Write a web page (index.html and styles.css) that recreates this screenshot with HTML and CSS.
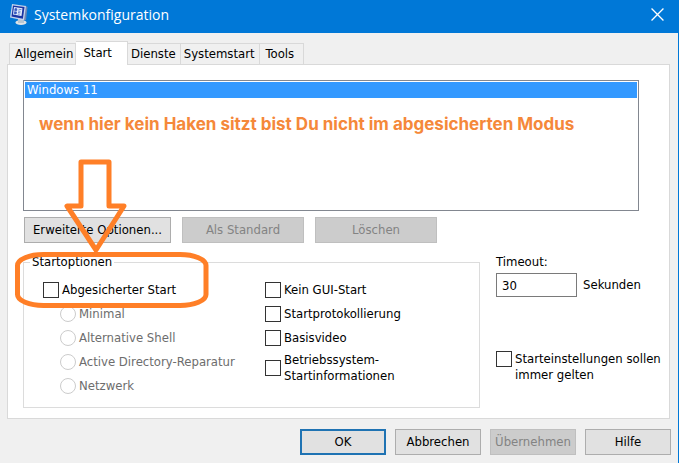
FILE: index.html
```
<!DOCTYPE html>
<html lang="de">
<head>
<meta charset="utf-8">
<title>Systemkonfiguration</title>
<link rel="stylesheet" href="styles.css">
</head>
<body>
<div class="window">
  <header class="titlebar">
    <svg class="app-icon" viewBox="0 0 20 22" aria-hidden="true">
      <ellipse cx="12" cy="18.500" rx="5.500" ry="2.500" fill="#dfe3e6"/>
      <path d="M9 14l6 1v4H9z" fill="#b9c6d1"/>
      <path d="M16 1.500l2.500 1.500-1.500 13-3 .5z" fill="#6f86b4"/>
      <path d="M3 0l14 2-2 14.500L1 13.500z" fill="#c3d2ec"/>
      <path d="M4 1.500l11.500 1.600-1.600 11.600L2.500 12.500z" fill="#1b35a4"/>
      <path d="M5 3l8.500 1.200-1 7.800L4 10.500z" fill="#e8f1fd"/>
      <path d="M6 4.500l2 .3-.3 2-2-.3zM5.500 7.700l2 .3-.3 2-2-.3zM9.500 5.200l3 .4M9 7l2.500 .3M9 8.500l2.500 .4M8.700 10l2 .3" fill="#3558c0" stroke="#3558c0" stroke-width=".7"/>
    </svg>
    <h1 class="title">Systemkonfiguration</h1>
    <button class="close" type="button" aria-label="Schließen">
      <svg viewBox="0 0 12 12" aria-hidden="true"><path d="M.5 .5l11 11M11.500 .5l-11 11" stroke="#fff" stroke-width="1.200"/></svg>
    </button>
  </header>

  <main class="content">
    <div class="tabs" role="tablist">
      <button class="tab tab-first" type="button" role="tab">Allgemein</button>
      <button class="tab tab-active" type="button" role="tab" aria-selected="true">Start</button>
      <button class="tab" type="button" role="tab">Dienste</button>
      <button class="tab" type="button" role="tab">Systemstart</button>
      <button class="tab tab-last" type="button" role="tab">Tools</button>
    </div>

    <section class="panel" role="tabpanel">
      <div class="boot-list">
        <div class="boot-item">Windows 11</div>
        <p class="note">wenn hier kein Haken sitzt bist Du nicht im abgesicherten Modus</p>
      </div>

      <div class="actions">
        <button class="btn btn-wide" type="button">Erweiterte Optionen...</button>
        <button class="btn btn-mid" type="button" disabled>Als Standard</button>
        <button class="btn btn-mid" type="button" disabled>Löschen</button>
      </div>

      <div class="settings">
        <fieldset class="group">
          <legend>Startoptionen</legend>
          <div class="group-columns">
            <div class="column">
              <label class="option"><input type="checkbox">Abgesicherter Start</label>
              <label class="option sub"><input type="radio" name="mode" disabled>Minimal</label>
              <label class="option sub"><input type="radio" name="mode" disabled>Alternative Shell</label>
              <label class="option sub"><input type="radio" name="mode" disabled>Active Directory-Reparatur</label>
              <label class="option sub"><input type="radio" name="mode" disabled>Netzwerk</label>
            </div>
            <div class="column">
              <label class="option"><input type="checkbox">Kein GUI-Start</label>
              <label class="option"><input type="checkbox">Startprotokollierung</label>
              <label class="option"><input type="checkbox">Basisvideo</label>
              <label class="option option-tall"><input type="checkbox"><span>Betriebssystem-<br>Startinformationen</span></label>
            </div>
          </div>
        </fieldset>

        <div class="side">
          <label class="timeout-label" for="timeout">Timeout:</label>
          <div class="timeout-row">
            <input class="timeout" id="timeout" type="text" value="30">
            <span>Sekunden</span>
          </div>
          <label class="option option-top"><input type="checkbox"><span>Starteinstellungen sollen<br>immer gelten</span></label>
        </div>
      </div>
    </section>
  </main>

  <footer class="footer">
    <button class="btn btn-default" type="button">OK</button>
    <button class="btn" type="button">Abbrechen</button>
    <button class="btn" type="button" disabled>Übernehmen</button>
    <button class="btn" type="button">Hilfe</button>
  </footer>

  <svg class="markup" viewBox="0 0 200 156" aria-hidden="true">
    <path d="M69 6h28v44h15L84 94 55 50h14z"/>
    <rect x="5.500" y="98.500" width="188.500" height="51" rx="26" ry="11"/>
  </svg>
</div>
</body>
</html>
```
FILE: styles.css
```
* {
  box-sizing: border-box;
}

body {
  margin: 0;
  background: #f0f0f0;
  color: #000;
  font: 13px/16px Tahoma, "DejaVu Sans Condensed", "Noto Sans", sans-serif;
}

button,
input {
  font: inherit;
  color: inherit;
}

.window {
  position: relative;
  display: flex;
  flex-direction: column;
  min-height: 100vh;
  border-right: 1px solid #0078d7;
}

.titlebar {
  display: flex;
  align-items: center;
  height: 33px;
  padding: 0 14px 4px 9px;
  background: #0078d7;
  color: #fff;
}

.app-icon {
  width: 20px;
  height: 22px;
}

.title {
  flex: 1;
  margin: 0 0 0 5px;
  font: 14px/20px "Segoe UI", "Open Sans", sans-serif;
}

.close {
  padding: 0;
  border: 0;
  background: none;
}

.close svg {
  display: block;
  width: 13px;
  height: 13px;
}

.content {
  padding: 8px 8px 0 7px;
}

.tabs {
  display: flex;
  align-items: flex-end;
  padding-left: 2px;
}

.tab {
  height: 21px;
  padding: 0 4px 0 3px;
  border: 1px solid #d9d9d9;
  border-width: 1px 1px 0 0;
  background: #f0f0f0;
}

.tab-first {
  padding: 0 2px 0 5px;
  border-left-width: 1px;
}

.tab-last {
  padding: 0 9px 0 6px;
}

.tab-active {
  z-index: 1;
  height: 24px;
  margin-bottom: -1px;
  padding: 0 15px 2px 7px;
  background: #fff;
}

.panel {
  padding: 15px 0 10px 15px;
  border: 1px solid #d9d9d9;
  background: #fff;
}

.boot-list {
  height: 131px;
  margin-right: 30px;
  padding: 1px;
  border: 1px solid #828790;
}

.boot-item {
  padding-left: 2px;
  background: #3399ff;
  color: #fff;
}

.note {
  margin: 16px 0 0 14px;
  color: #f5883a;
  font: 700 17px/20px Inter, "Liberation Sans", sans-serif;
}

.actions {
  display: flex;
  gap: 11px;
  margin-top: 6px;
  padding-left: 1px;
}

.btn {
  width: 86px;
  height: 26px;
  padding: 0;
  border: 1px solid #adadad;
  background: #e1e1e1;
}

.btn-wide {
  width: 147px;
}

.btn-mid {
  width: 122px;
}

.btn:disabled {
  border-color: #bfbfbf;
  background: #ccc;
  color: #838383;
}

.btn-default {
  border: 2px solid #1f73b3;
}

.settings {
  display: flex;
  gap: 16px;
  margin-top: 11px;
}

.group {
  flex: 1;
  min-width: 0;
  margin: 0;
  padding: 8px 19px 9px;
  border: 1px solid #dcdcdc;
}

.group legend {
  margin-left: -13px;
  padding: 0 2px;
}

.group-columns {
  display: grid;
  grid-template-columns: 222px 1fr;
}

.column {
  display: flex;
  flex-direction: column;
}

.option {
  display: flex;
  align-items: center;
  gap: 3px;
  min-height: 24px;
}

.option input {
  flex: none;
  width: 16px;
  height: 16px;
  margin: 0;
  appearance: none;
  border: 1px solid #333;
  background: #fff;
}

.option input[type="radio"] {
  border-color: #ccc;
  border-radius: 50%;
}

.sub {
  margin-left: 17px;
  color: #6d6d6d;
}

.option-tall {
  min-height: 36px;
}

.option-top {
  align-items: flex-start;
}

.side {
  width: 173px;
}

.timeout-label {
  display: block;
}

.timeout-row {
  display: flex;
  align-items: center;
  gap: 6px;
  margin: 3px 0 54px;
}

.timeout {
  width: 81px;
  height: 24px;
  padding: 0 5px;
  border: 1px solid #7a7a7a;
  background: #fff;
}

.footer {
  display: flex;
  justify-content: flex-end;
  gap: 9px;
  padding: 10px 7px 8px;
}

.markup {
  position: absolute;
  z-index: 2;
  top: 156px;
  left: 12px;
  width: 200px;
  height: 156px;
  fill: none;
  stroke: #ff7f27;
  stroke-width: 5px;
  stroke-linejoin: round;
  pointer-events: none;
}
```
